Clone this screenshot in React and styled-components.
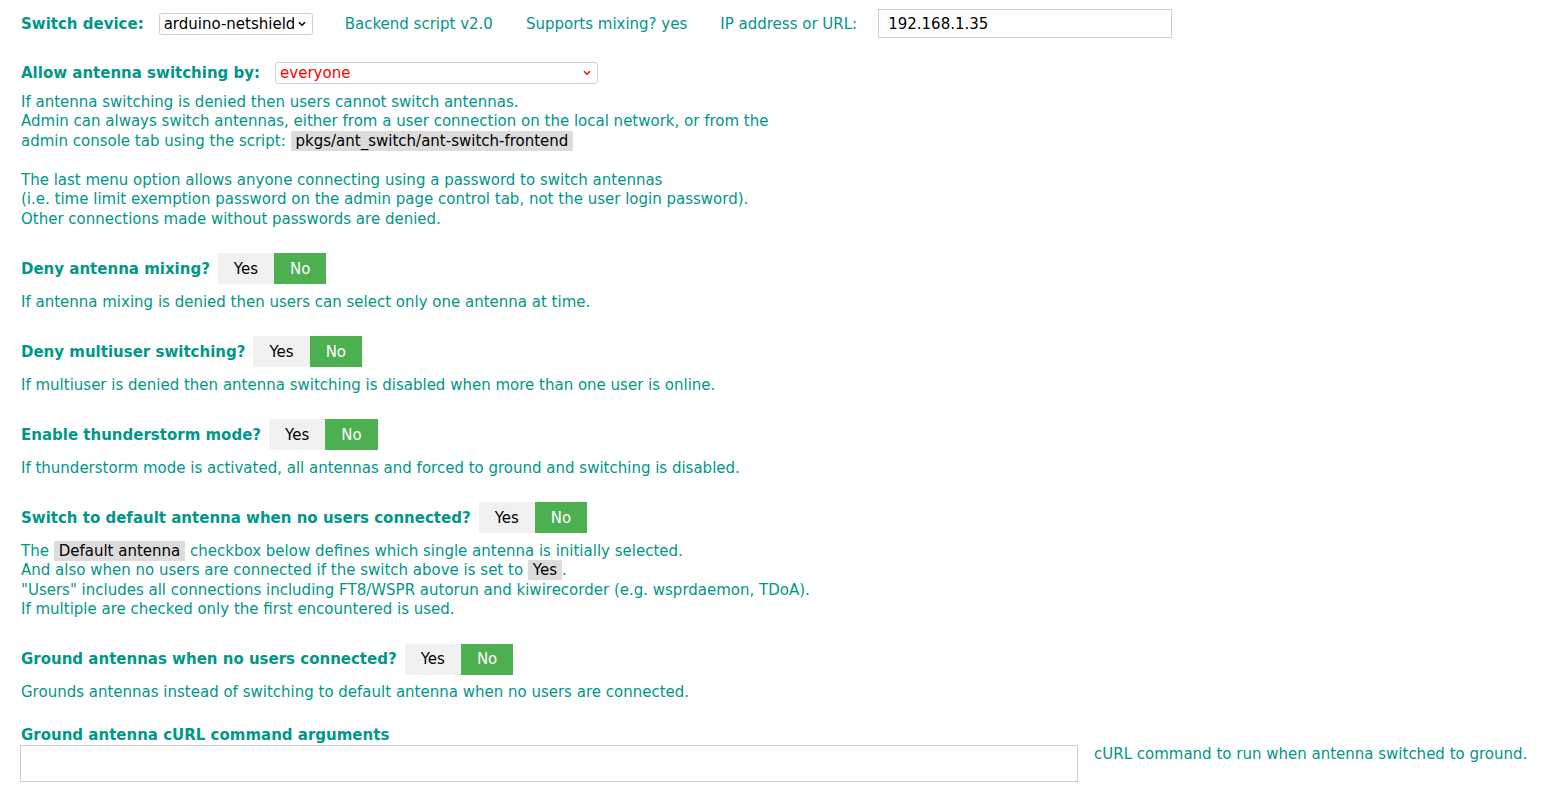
import styled, { createGlobalStyle } from 'styled-components';

const GlobalStyle = createGlobalStyle`
  html, body {
    margin: 0;
    padding: 0;
    background: #fff;
  }
  body {
    font-family: Verdana, "DejaVu Sans", sans-serif;
    font-size: 15px;
    color: #009688;
  }
`;

const Page = styled.div`
  padding: 9px 20px 0 20px;
  display: flex;
  flex-direction: column;
`;

const TopRow = styled.div`
  display: flex;
  align-items: center;
  height: 29px;
  gap: 32px;
`;

const Field = styled.div`
  display: flex;
  align-items: center;
  gap: ${(p) => p.$gap || 15}px;
`;

const Label = styled.span`
  font-weight: bold;
  white-space: nowrap;
  padding-left: 1px;
`;

const Info = styled.span`
  white-space: nowrap;
  margin-left: ${(p) => p.$shift || 0}px;
`;

const SelectWrap = styled.div`
  position: relative;
  width: ${(p) => p.$width}px;
  height: 22px;
`;

const Select = styled.select`
  appearance: none;
  -webkit-appearance: none;
  width: 100%;
  height: 100%;
  margin: 0;
  padding: 0 18px 0 4px;
  font-family: inherit;
  font-size: 15px;
  color: ${(p) => (p.$warn ? '#ff0000' : '#000')};
  background: #fff;
  border: 1px solid #d0d0d0;
  border-radius: 3px;
  outline: none;
`;

const Chevron = styled.svg`
  position: absolute;
  right: 7px;
  top: 8px;
  width: 8px;
  height: 6px;
  pointer-events: none;
`;

const TextInput = styled.input`
  box-sizing: border-box;
  width: ${(p) => p.$width}px;
  height: ${(p) => p.$height}px;
  margin: 0;
  padding: 0 9px;
  font-family: inherit;
  font-size: 15px;
  color: #000;
  border: 1px solid #ccc;
  border-radius: 0;
  outline: none;
`;

const SecondRow = styled(Field)`
  margin-top: 24px;
  height: 22px;
`;

const Para = styled.div`
  line-height: 19.5px;
  margin-top: 8.5px;
  padding-left: 1px;
  white-space: nowrap;
`;

const Code = styled.span`
  background: #dcdcdc;
  color: #000;
  padding: 1px 5px;
`;

const ToggleRow = styled.div`
  display: flex;
  align-items: center;
  gap: 8px;
  margin-top: 24px;
  height: 31px;
`;

const ToggleGroup = styled.div`
  display: flex;
`;

const ToggleBtn = styled.button`
  height: 31px;
  padding: 0 16px;
  border: none;
  margin: 0;
  font-family: inherit;
  font-size: 15px;
  cursor: pointer;
  background: ${(p) => (p.$on ? '#4caf50' : '#f1f1f1')};
  color: ${(p) => (p.$on ? '#fff' : '#000')};
`;

const Heading = styled.div`
  font-weight: bold;
  line-height: 19.5px;
  margin-top: 23px;
  padding-left: 1px;
`;

const CurlRow = styled.div`
  display: flex;
  align-items: flex-start;
  gap: 16px;
`;

const SideNote = styled.div`
  line-height: 19.5px;
  white-space: nowrap;
`;

function Dropdown({ width, value, warn }) {
  return (
    <SelectWrap $width={width}>
      <Select $warn={warn} defaultValue={value}>
        <option value={value}>{value}</option>
      </Select>
      <Chevron viewBox="0 0 8 6">
        <path
          d="M1 1.2 L4 4.2 L7 1.2"
          fill="none"
          stroke={warn ? '#ff0000' : '#000'}
          strokeWidth="1.5"
        />
      </Chevron>
    </SelectWrap>
  );
}

function Toggle({ label }) {
  return (
    <ToggleRow>
      <Label>{label}</Label>
      <ToggleGroup>
        <ToggleBtn>Yes</ToggleBtn>
        <ToggleBtn $on>No</ToggleBtn>
      </ToggleGroup>
    </ToggleRow>
  );
}

export default function App() {
  return (
    <>
      <GlobalStyle />
      <Page>
        <TopRow>
          <Field>
            <Label>Switch device:</Label>
            <Dropdown width={154} value="arduino-netshield" />
          </Field>
          <Info>Backend script v2.0</Info>
          <Info $shift={1}>Supports mixing? yes</Info>
          <Field $gap={21}>
            <Info $shift={1}>IP address or URL:</Info>
            <TextInput $width={294} $height={29} defaultValue="192.168.1.35" />
          </Field>
        </TopRow>

        <SecondRow>
          <Label>Allow antenna switching by:</Label>
          <Dropdown width={323} value="everyone" warn />
        </SecondRow>
        <Para>
          If antenna switching is denied then users cannot switch antennas.
          <br />
          Admin can always switch antennas, either from a user connection on the local network, or from the
          <br />
          admin console tab using the script: <Code>pkgs/ant_switch/ant-switch-frontend</Code>
          <br />
          <br />
          The last menu option allows anyone connecting using a password to switch antennas
          <br />
          (i.e. time limit exemption password on the admin page control tab, not the user login password).
          <br />
          Other connections made without passwords are denied.
        </Para>

        <Toggle label="Deny antenna mixing?" />
        <Para>If antenna mixing is denied then users can select only one antenna at time.</Para>

        <Toggle label="Deny multiuser switching?" />
        <Para>If multiuser is denied then antenna switching is disabled when more than one user is online.</Para>

        <Toggle label="Enable thunderstorm mode?" />
        <Para>If thunderstorm mode is activated, all antennas and forced to ground and switching is disabled.</Para>

        <Toggle label="Switch to default antenna when no users connected?" />
        <Para>
          The <Code>Default antenna</Code> checkbox below defines which single antenna is initially selected.
          <br />
          And also when no users are connected if the switch above is set to <Code>Yes</Code>.
          <br />
          "Users" includes all connections including FT8/WSPR autorun and kiwirecorder (e.g. wsprdaemon, TDoA).
          <br />
          If multiple are checked only the first encountered is used.
        </Para>

        <Toggle label="Ground antennas when no users connected?" />
        <Para>Grounds antennas instead of switching to default antenna when no users are connected.</Para>

        <Heading>Ground antenna cURL command arguments</Heading>
        <CurlRow>
          <TextInput $width={1058} $height={37} />
          <SideNote>cURL command to run when antenna switched to ground.</SideNote>
        </CurlRow>
      </Page>
    </>
  );
}
